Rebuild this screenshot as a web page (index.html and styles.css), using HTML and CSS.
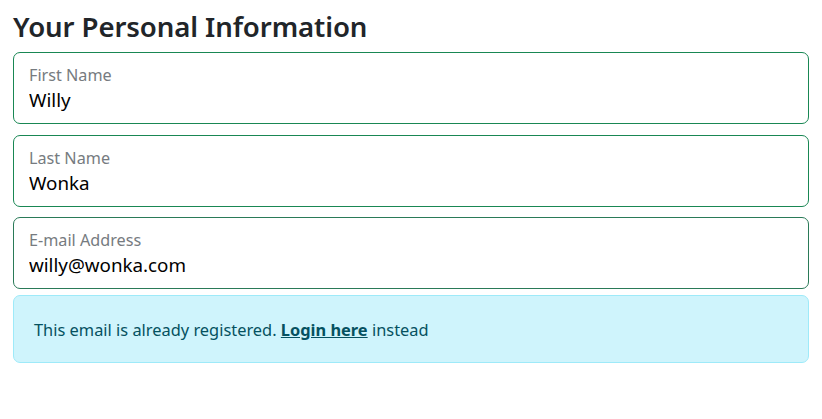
FILE: index.html
```html
<!DOCTYPE html>
<html lang="en">
<head>
<meta charset="utf-8">
<title>Your Personal Information</title>
<link rel="stylesheet" href="styles.css">
</head>
<body>
<main class="page">
  <h2 class="title">Your Personal Information</h2>
  <form class="form">
    <div class="field field-valid">
      <label class="field-label" for="first">First Name</label>
      <input class="field-input" id="first" type="text" value="Willy">
    </div>
    <div class="field field-valid field-second">
      <label class="field-label" for="last">Last Name</label>
      <input class="field-input" id="last" type="text" value="Wonka">
    </div>
    <div class="field field-email">
      <label class="field-label" for="email">E-mail Address</label>
      <input class="field-input" id="email" type="email" value="willy@wonka.com">
    </div>
    <div class="alert">This email is already registered. <a class="alert-link" href="#">Login here</a> instead</div>
  </form>
</main>
</body>
</html>
```
FILE: styles.css
```css
html, body {
  margin: 0;
  padding: 0;
  background: #ffffff;
}

body {
  font-family: "Noto Sans", "Open Sans", "DejaVu Sans", sans-serif;
  color: #212529;
}

.page {
  padding: 8px 13px 0 13px;
}

.title {
  margin: 0 0 8px 0;
  font-size: 27.6px;
  font-weight: 600;
  line-height: 36px;
  color: #212529;
  letter-spacing: -0.1px;
}

.form {
  display: flex;
  flex-direction: column;
}

.field {
  box-sizing: border-box;
  height: 72px;
  border: 1px solid #198754;
  border-radius: 7px;
  padding: 12px 15px 0 15px;
  display: flex;
  flex-direction: column;
  margin-bottom: 11px;
}

.field-second {
  margin-bottom: 10px;
}

.field-email {
  border-color: #2a7a58;
  margin-bottom: 6px;
}

.field-label {
  font-size: 16.2px;
  line-height: 21px;
  color: #767b80;
}

.field-input {
  border: 0;
  outline: none;
  padding: 0;
  margin: 0;
  font-family: inherit;
  font-size: 18.8px;
  line-height: 28px;
  height: 28px;
  color: #000000;
  background: transparent;
}

.alert {
  box-sizing: border-box;
  height: 68px;
  border: 1px solid #9eeaf9;
  border-radius: 7px;
  background: #cff4fc;
  color: #055160;
  padding: 0 20px;
  display: flex;
  align-items: center;
  font-size: 16.4px;
  white-space: pre;
}

.alert-link {
  color: #055160;
  font-weight: 700;
  text-decoration: underline;
}
```
